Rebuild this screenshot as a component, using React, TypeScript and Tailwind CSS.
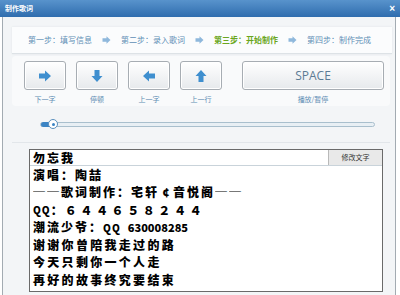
import React from "react"

const ui = { fontFamily: '"Noto Sans CJK SC", "Noto Sans", sans-serif' }
const lyricFont = { fontFamily: '"Noto Sans CJK SC", "Liberation Sans", sans-serif' }

function Arrow({ rotate }: { rotate: number }) {
  return (
    <svg width="14" height="12" viewBox="0 0 14 12" style={{ transform: `rotate(${rotate}deg)` }}>
      <polygon points="1,3.5 7,3.5 7,0.5 13,6 7,11.5 7,8.5 1,8.5" fill="#3f8fcf" />
    </svg>
  )
}

function KeyButton({ rotate, label }: { rotate: number; label: string }) {
  return (
    <div className="flex w-[42px] flex-col items-center">
      <div className="flex h-[29px] w-[42px] items-center justify-center rounded-[3px] border border-[#a7adb3] bg-gradient-to-b from-white to-[#e6e9ec] shadow-[inset_0_0_0_1px_#fff]">
        <Arrow rotate={rotate} />
      </div>
      <div className="mt-[4px] whitespace-nowrap text-[7px] leading-[10px] text-[#5d8cb3]" style={ui}>
        {label}
      </div>
    </div>
  )
}

const steps = [
  { text: "第一步：填写信息", active: false },
  { text: "第二步：录入歌词", active: false },
  { text: "第三步：开始制作", active: true },
  { text: "第四步：制作完成", active: false },
]

function Dash() {
  return <span className="inline-block w-[14px] overflow-hidden tracking-normal">─</span>
}

const row = "flex h-[17.5px] items-center whitespace-nowrap pl-[3px] text-[12px] font-black"

export default function App() {
  return (
    <div className="h-[295px] w-[400px] overflow-hidden bg-white">
      <div className="flex h-[17px] items-center justify-between bg-gradient-to-b from-[#5893cc] to-[#2f6dae] pl-[5px] pr-[5px]">
        <span className="text-[7px] font-bold leading-none text-white" style={ui}>
          制作歌词
        </span>
        <span className="text-[10px] font-bold leading-none text-white" style={{ fontFamily: '"Liberation Sans", sans-serif' }}>
          ×
        </span>
      </div>

      <div className="ml-[2px] flex h-[278px] w-[394px] flex-col border-x border-[#a3abb2] bg-[#f3f5f7]">
        <div className="ml-[9px] mr-[3px] mt-[10px] flex h-[27px] items-center border-b border-[#dde2e6] bg-[#fbfcfd] pl-[16px] shadow-[0_0_2px_#dfe4e8]">
          {steps.map((s, i) => (
            <React.Fragment key={s.text}>
              <span
                className={`whitespace-nowrap text-[8px] leading-none ${s.active ? "font-bold text-[#6aa620]" : "text-[#5f8fb6]"}`}
                style={ui}
              >
                {s.text}
              </span>
              {i < 3 && (
                <span className="mx-[9px] flex items-center">
                  <svg width="11" height="8" viewBox="0 0 14 12">
                    <polygon points="1,3.5 7,3.5 7,0.5 13,6 7,11.5 7,8.5 1,8.5" fill="#8fb8dc" />
                  </svg>
                </span>
              )}
            </React.Fragment>
          ))}
        </div>

        <div className="ml-[9px] mr-[5px] mt-[2px] flex h-[50px] gap-[10px] rounded-[4px] bg-[#f9fafb] pl-[12px] pt-[5px]">
          <KeyButton rotate={0} label="下一字" />
          <KeyButton rotate={90} label="停顿" />
          <KeyButton rotate={180} label="上一字" />
          <KeyButton rotate={270} label="上一行" />
          <div className="ml-[10px] flex w-[142px] flex-col items-center">
            <div className="flex h-[29px] w-[142px] items-center justify-center rounded-[3px] border border-[#a7adb3] bg-gradient-to-b from-white to-[#e6e9ec] text-[12px] text-[#5c7b95] shadow-[inset_0_0_0_1px_#fff]" style={{ fontFamily: '"Open Sans", "Liberation Sans", sans-serif' }}>
              SPACE
            </div>
            <div className="mt-[4px] whitespace-nowrap text-[7px] leading-[10px] text-[#5d8cb3]" style={ui}>
              播放/暂停
            </div>
          </div>
        </div>

        <div className="ml-[9px] mr-[5px] flex h-[37px] items-center border-b border-[#e2e6ea] pl-[28px]">
          <div className="relative flex h-[5px] w-[335px] items-center rounded-full border border-[#a9bfcd] bg-[#e8eff4]">
            <div className="h-[5px] w-[12px] rounded-full bg-[#3b84c4]" />
            <div className="absolute left-[7px] top-1/2 flex h-[10px] w-[10px] -translate-y-1/2 items-center justify-center rounded-full border border-[#5a8fbd] bg-white">
              <div className="h-[3px] w-[3px] rounded-full bg-[#3b84c4]" />
            </div>
          </div>
        </div>

        <div className="ml-[26px] mt-[6px] flex w-[354px] flex-col border border-[#6a6a6a] bg-white pb-[2px] text-black" style={lyricFont}>
          <div className="flex h-[16px] border-b border-[#c9d3da]">
            <div className="flex flex-1 items-center pl-[3px] text-[12px] font-black tracking-[2px]">勿忘我</div>
            <div className="flex w-[54px] items-center justify-center border-l border-[#b9b9b9] bg-[#e9e9e9] text-[7px] text-[#333]" style={ui}>
              修改文字
            </div>
          </div>
          <div className={`${row} tracking-[2px]`}>演唱：陶喆</div>
          <div className={`${row} tracking-[2px]`}>
            <Dash />
            <Dash />
            <span>歌词制作：宅轩</span>
            <span className="inline-block w-[14px] text-center tracking-normal">¢</span>
            <span>音悦阁</span>
            <Dash />
            <Dash />
          </div>
          <div className={row}>
            <span className="text-[10px] tracking-[1px]">QQ</span>
            <span className="tracking-[2px]">：</span>
            <span className="tracking-[3.6px]">６４４６５８２４４</span>
          </div>
          <div className={row}>
            <span className="tracking-[2px]">潮流少爷：</span>
            <span className="text-[10px] tracking-[1px]">QQ</span>
            <span className="ml-[7px] text-[11px]">630008285</span>
          </div>
          {["谢谢你曾陪我走过的路", "今天只剩你一个人走", "再好的故事终究要结束"].map((l) => (
            <div key={l} className={`${row} tracking-[2.3px]`}>
              {l}
            </div>
          ))}
        </div>
      </div>
    </div>
  )
}
